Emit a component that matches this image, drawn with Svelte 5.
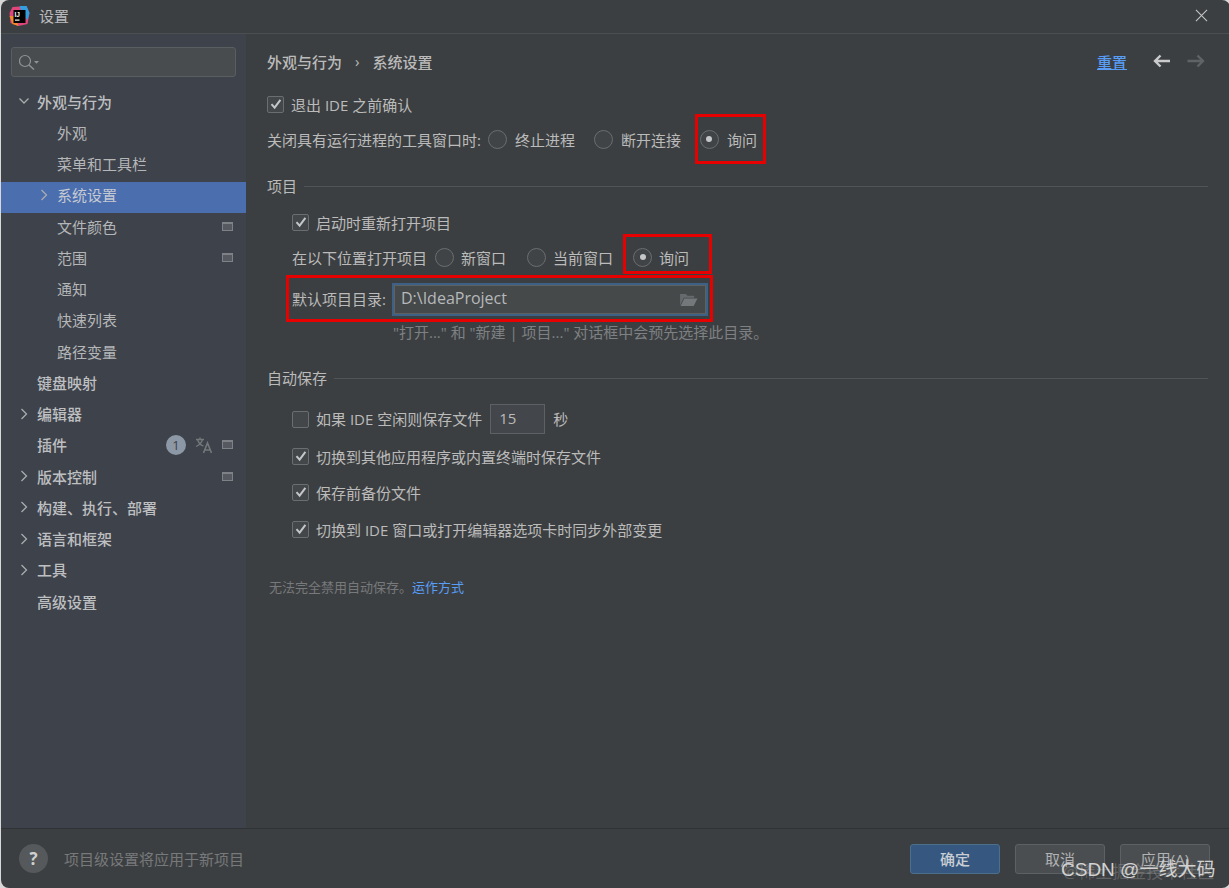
<script>
  const navItems = [
    { label: "外观与行为", level: 0, arrow: "down", bold: true },
    { label: "外观", level: 1 },
    { label: "菜单和工具栏", level: 1 },
    { label: "系统设置", level: 1, arrow: "right", selected: true },
    { label: "文件颜色", level: 1, scope: true },
    { label: "范围", level: 1, scope: true },
    { label: "通知", level: 1 },
    { label: "快速列表", level: 1 },
    { label: "路径变量", level: 1 },
    { label: "键盘映射", level: 0, bold: true },
    { label: "编辑器", level: 0, arrow: "right", bold: true },
    { label: "插件", level: 0, bold: true, badge: "1", lang: true, scope: true },
    { label: "版本控制", level: 0, arrow: "right", bold: true, scope: true },
    { label: "构建、执行、部署", level: 0, arrow: "right", bold: true },
    { label: "语言和框架", level: 0, arrow: "right", bold: true },
    { label: "工具", level: 0, arrow: "right", bold: true },
    { label: "高级设置", level: 0, bold: true },
  ];
</script>

{#snippet check(on)}
  <span class="checkbox">
    {#if on}
      <svg width="12" height="12" viewBox="0 0 12 12"><path d="M1.5 6.2 L4.6 9.6 L10.4 1.8" fill="none" stroke="#c4c6c8" stroke-width="2" /></svg>
    {/if}
  </span>
{/snippet}

{#snippet radio(label, on)}
  <span class="radioItem">
    <span class="radio">{#if on}<span class="dot"></span>{/if}</span>
    <span>{label}</span>
  </span>
{/snippet}

<div class="window">
  <header class="titlebar">
    <svg class="logo" width="21" height="20" viewBox="0 0 20 20">
      <path d="M3 1 L17 0 L20 7 L18 18 L9 20 L1 17 L0 7 Z" fill="#e0457b" />
      <path d="M10 0 L17 0 L20 7 L18 14 L13 8 Z" fill="#2f9fe0" />
      <path d="M0 10 L3 18 L9 20 L5 10 Z" fill="#f08c2c" />
      <rect x="4" y="4" width="12" height="13" fill="#000" />
      <text x="5" y="10.5" class="logoText">IJ</text>
      <rect x="5.5" y="13.5" width="4.5" height="1.2" fill="#fff" />
    </svg>
    <span class="title">设置</span>
    <svg class="close" width="13" height="13" viewBox="0 0 14 14"><path d="M1 1 L13 13 M13 1 L1 13" stroke="#c8c8c8" stroke-width="1.1" /></svg>
  </header>

  <div class="body">
    <aside class="sidebar">
      <div class="search">
        <svg width="22" height="18" viewBox="0 0 22 18">
          <circle cx="6" cy="8" r="5.5" fill="none" stroke="#8f9296" stroke-width="1.2" />
          <path d="M10 12 L15 16.5" stroke="#8f9296" stroke-width="1.5" />
          <path d="M15 8 L20 8 L17.5 10.8 Z" fill="#8f9296" />
        </svg>
      </div>
      <nav>
        {#each navItems as item}
          <div class="navRow" class:selected={item.selected} class:sub={item.level === 1} class:bold={item.bold}>
            {#if item.arrow}
              <svg class="arrow" width="10" height="12" viewBox="0 0 10 12">
                {#if item.arrow === "down"}
                  <path d="M0.5 3.5 L5 8 L9.5 3.5" fill="none" stroke="#a9acaf" stroke-width="1.3" />
                {:else}
                  <path d="M2.5 1 L7.5 6 L2.5 11" fill="none" stroke="#a9acaf" stroke-width="1.3" />
                {/if}
              </svg>
            {/if}
            <span class="navLabel">{item.label}</span>
            {#if item.badge}<span class="badge">{item.badge}</span>{/if}
            {#if item.lang}
              <svg class="langIcon" width="18" height="18" viewBox="0 0 18 18">
                <path d="M1 3.5 H9 M5 1.5 V3.5 M2.5 3.5 C3.5 7 5.5 9 8.5 10 M7.5 3.5 C6.5 7 4.5 9 1 10.5" fill="none" stroke="#74787c" stroke-width="1.3" />
                <path d="M8.5 17 L12.5 7 L16.5 17 M10 14 H15" fill="none" stroke="#74787c" stroke-width="1.6" />
              </svg>
            {/if}
            {#if item.scope}<span class="scope"></span>{/if}
          </div>
        {/each}
      </nav>
    </aside>

    <main class="content">
      <div class="crumbs">
        <span class="crumb">外观与行为</span>
        <span class="crumbSep">›</span>
        <span class="crumb">系统设置</span>
        <a class="reset" href="#reset">重置</a>
        <svg class="nav" width="18" height="14" viewBox="0 0 18 14"><path d="M1.5 7 H17 M7.5 1.5 L2 7 L7.5 12.5" fill="none" stroke="#c9cbcd" stroke-width="2.4" /></svg>
        <svg class="nav" width="18" height="14" viewBox="0 0 18 14"><path d="M0.5 7 H16 M10.5 1.5 L16 7 L10.5 12.5" fill="none" stroke="#5f6366" stroke-width="2.4" /></svg>
      </div>

      <div class="line first">{@render check(true)}<span>退出 IDE 之前确认</span></div>
      <div class="line radios closeRow">
        <span>关闭具有运行进程的工具窗口时:</span>
        {@render radio("终止进程", false)}
        {@render radio("断开连接", false)}
        {@render radio("询问", true)}
      </div>

      <div class="groupTitle project"><span>项目</span><i></i></div>
      <div class="group">
        <div class="line reopen">{@render check(true)}<span>启动时重新打开项目</span></div>
        <div class="line radios openRow">
          <span>在以下位置打开项目</span>
          {@render radio("新窗口", false)}
          {@render radio("当前窗口", false)}
          {@render radio("询问", true)}
        </div>
        <div class="line dirRow">
          <span class="dirLabel">默认项目目录:</span>
          <div class="dirField">
            <span class="dirValue">D:\IdeaProject</span>
            <svg width="19" height="15" viewBox="0 0 20 16">
              <path d="M1 14 V2 H7 L9 4 H16 V6 H5 Z" fill="#666a6d" />
              <path d="M1.5 15 L5.5 7 H19.5 L15.5 15 Z" fill="#74787b" />
            </svg>
          </div>
        </div>
        <div class="hint">"打开..." 和 "新建 | 项目..." 对话框中会预先选择此目录。</div>
      </div>

      <div class="groupTitle autosave"><span>自动保存</span><i></i></div>
      <div class="group">
        <div class="line idle">
          {@render check(false)}<span class="idleLabel">如果 IDE 空闲则保存文件</span>
          <span class="numInput">15</span>
          <span class="unit">秒</span>
        </div>
        <div class="line item">{@render check(true)}<span>切换到其他应用程序或内置终端时保存文件</span></div>
        <div class="line item">{@render check(true)}<span>保存前备份文件</span></div>
        <div class="line item last">{@render check(true)}<span>切换到 IDE 窗口或打开编辑器选项卡时同步外部变更</span></div>
      </div>

      <div class="note">无法完全禁用自动保存。<a href="#how">运作方式</a></div>
    </main>
  </div>

  <footer class="footer">
    <span class="help">?</span>
    <span class="footerText">项目级设置将应用于新项目</span>
    <button class="primary">确定</button>
    <button>取消</button>
    <button>应用(A)</button>
  </footer>

  <!-- annotations drawn over the screenshot -->
  <span class="mark markA"></span>
  <span class="mark markB"></span>
  <span class="mark markC"></span>

  <span class="wmBack">@稀土掘金技术社区</span>
  <span class="wmFront">CSDN @一线大码</span>
</div>

<style>
  :global(body) {
    margin: 0;
    background: #d8d8d8;
  }

  .window {
    position: relative;
    width: 1229px;
    height: 888px;
    margin-left: 1px;
    display: flex;
    flex-direction: column;
    overflow: hidden;
    border-radius: 8px;
    background: #3c3f41;
    color: #bbbbbb;
    font-family: "Open Sans", "Noto Sans CJK SC", sans-serif;
    font-size: 15px;
  }

  .titlebar {
    height: 31px;
    padding: 0 22px 2px 8px;
    flex: none;
    display: flex;
    align-items: center;
    border-bottom: 1px solid #4c4f51;
  }

  .logoText {
    font-family: "Liberation Sans", sans-serif;
    font-size: 6.5px;
    font-weight: 700;
    fill: #fff;
  }

  .title {
    margin-left: 9px;
    color: #b9bbbd;
  }

  .close {
    margin-left: auto;
  }

  .body {
    flex: 1;
    display: flex;
    min-height: 0;
  }

  .sidebar {
    width: 245px;
    flex: none;
    background: #3e424a;
    padding-top: 13px;
    box-sizing: border-box;
  }

  .search {
    height: 30px;
    margin: 0 10px;
    box-sizing: border-box;
    border: 1px solid #5b5e60;
    border-radius: 3px;
    background: #494c4e;
    display: flex;
    align-items: center;
    padding-left: 7px;
  }

  nav {
    margin-top: 11px;
  }

  .navRow {
    position: relative;
    height: 31.25px;
    display: flex;
    align-items: center;
    padding: 0 13px 5px 36px;
    box-sizing: border-box;
    color: #b4b6b8;
  }

  .navRow.sub {
    padding-left: 56px;
  }

  .navRow.bold {
    font-weight: 500;
    color: #bdbfc1;
  }

  .navRow.selected {
    background: #4b6eaf;
    color: #c4c9d2;
  }

  .arrow {
    position: absolute;
    left: 18px;
  }

  .sub .arrow {
    left: 38px;
  }

  .navLabel {
    flex: 1;
  }

  .badge {
    width: 20px;
    height: 20px;
    border-radius: 50%;
    background: #8d98a6;
    color: #3e424a;
    font-size: 13px;
    font-weight: 400;
    line-height: 20px;
    text-align: center;
  }

  .langIcon {
    margin-left: 9px;
    margin-right: 9px;
  }

  .scope {
    width: 9px;
    height: 6px;
    border: 1px solid #7e8286;
    border-top-width: 2px;
    background: #565a60;
  }

  .content {
    flex: 1;
    min-width: 0;
    padding: 0 22px 0 21px;
    box-sizing: border-box;
  }

  .crumbs {
    height: 57px;
    padding-bottom: 3px;
    box-sizing: border-box;
    display: flex;
    align-items: center;
    font-weight: 500;
  }

  .crumbSep {
    margin: 0 13px;
    font-weight: 400;
  }

  .reset {
    margin-left: auto;
    margin-right: 26px;
    color: #589df6;
    font-weight: 500;
    text-decoration: underline;
    text-underline-offset: 1px;
    text-decoration-thickness: 1px;
  }

  .crumbs .nav:last-child {
    margin-left: 16px;
    margin-right: 3px;
  }

  a {
    color: #589df6;
    text-decoration: none;
  }

  .line {
    display: flex;
    align-items: center;
    white-space: nowrap;
    box-sizing: border-box;
  }

  .first {
    height: 28px;
    padding-bottom: 2px;
    gap: 7px;
  }

  .closeRow {
    height: 28px;
    padding-bottom: 2px;
    margin-top: 7px;
  }

  .closeRow .radioItem {
    margin-left: 19px;
  }

  .closeRow > span:nth-child(2) {
    margin-left: 7px;
  }

  .checkbox {
    width: 15px;
    height: 15px;
    flex: none;
    border: 1px solid #6b6e70;
    border-radius: 2px;
    background: #43474a;
    display: inline-flex;
    align-items: center;
    justify-content: center;
  }

  .radioItem {
    display: inline-flex;
    align-items: center;
    gap: 8px;
  }

  .radio {
    width: 19px;
    height: 19px;
    box-sizing: border-box;
    border: 1px solid #6b6e70;
    border-radius: 50%;
    background: #414447;
    display: inline-flex;
    align-items: center;
    justify-content: center;
  }

  .dot {
    width: 6px;
    height: 6px;
    border-radius: 50%;
    background: #c4c6c8;
  }

  .groupTitle {
    display: flex;
    align-items: center;
    gap: 7px;
    height: 20px;
  }

  .groupTitle span {
    padding-bottom: 2px;
  }

  .groupTitle i {
    flex: 1;
    height: 1px;
    background: #515456;
  }

  .project {
    margin-top: 22px;
  }

  .autosave {
    margin-top: 27px;
  }

  .group {
    padding-left: 25px;
  }

  .reopen {
    margin-top: 13px;
    height: 28px;
    padding-bottom: 2px;
    gap: 7px;
  }

  .openRow {
    margin-top: 7px;
    height: 28px;
    padding-bottom: 2px;
  }

  .openRow .radioItem {
    margin-left: 21px;
    gap: 7px;
  }

  .openRow > span:nth-child(2) {
    margin-left: 8px;
  }

  .openRow .radioItem:last-child {
    margin-left: 20px;
  }

  .dirRow {
    margin-top: 10px;
    height: 34px;
    gap: 8px;
  }

  .dirLabel,
  .dirValue,
  .idleLabel {
    padding-bottom: 2px;
  }

  .dirField {
    width: 312px;
    height: 29px;
    box-sizing: border-box;
    border: 1px solid #5e6062;
    outline: 2px solid #3d6185;
    background: #45494a;
    display: flex;
    align-items: center;
    justify-content: space-between;
    padding: 0 7px 0 6px;
    color: #b6b8ba;
    font-size: 16px;
  }

  .hint {
    margin-top: 7px;
    padding-left: 101px;
    height: 18px;
    line-height: 18px;
    color: #7e8183;
    white-space: nowrap;
  }

  .idle {
    margin-top: 16px;
    height: 30px;
    gap: 7px;
  }

  .numInput {
    width: 55px;
    height: 30px;
    box-sizing: border-box;
    margin-left: 1px;
    border: 1px solid #5e6163;
    background: #43464a;
    padding-left: 8px;
    line-height: 26px;
    font-size: 15px;
  }

  .unit {
    margin-left: 1px;
    margin-top: -2px;
  }

  .item {
    height: 28px;
    margin-top: 8px;
    gap: 7px;
  }

  .item.last {
    margin-top: 9px;
  }

  .note {
    margin-top: 34px;
    padding-left: 2px;
    font-size: 13px;
    color: #77797b;
  }

  .footer {
    height: 60px;
    flex: none;
    box-sizing: border-box;
    border-top: 1px solid #303234;
    display: flex;
    align-items: center;
    padding: 0 20px 0 18px;
    gap: 15px;
  }

  .help {
    width: 29px;
    height: 29px;
    border-radius: 50%;
    background: #56595b;
    color: #cfd0d1;
    font-weight: 700;
    font-size: 17px;
    line-height: 29px;
    text-align: center;
  }

  .footerText {
    margin-left: 1px;
    margin-right: auto;
    color: #77797b;
  }

  button {
    width: 90px;
    height: 30px;
    box-sizing: border-box;
    border: 1px solid #5e6163;
    border-radius: 3px;
    background: #4b4e50;
    color: #b0b2b4;
    font: inherit;
    padding: 0;
  }

  button.primary {
    background: #365880;
    border-color: #4c708c;
    color: #c8ced4;
    font-weight: 500;
  }

  .mark {
    position: absolute;
    box-sizing: border-box;
    border: 3px solid #e60000;
  }

  .markA {
    left: 694px;
    top: 114px;
    width: 71px;
    height: 50px;
  }

  .markB {
    left: 622px;
    top: 234px;
    width: 89px;
    height: 40px;
  }

  .markC {
    left: 285px;
    top: 275px;
    width: 427px;
    height: 47px;
  }

  .wmBack {
    position: absolute;
    left: 1062px;
    top: 858px;
    font-size: 17px;
    color: rgba(190, 190, 190, 0.28);
    white-space: nowrap;
  }

  .wmFront {
    position: absolute;
    left: 1060px;
    top: 854px;
    font-size: 19px;
    color: #d2d2d2;
    white-space: nowrap;
    font-family: "Liberation Sans", "Noto Sans CJK SC", sans-serif;
  }
</style>
